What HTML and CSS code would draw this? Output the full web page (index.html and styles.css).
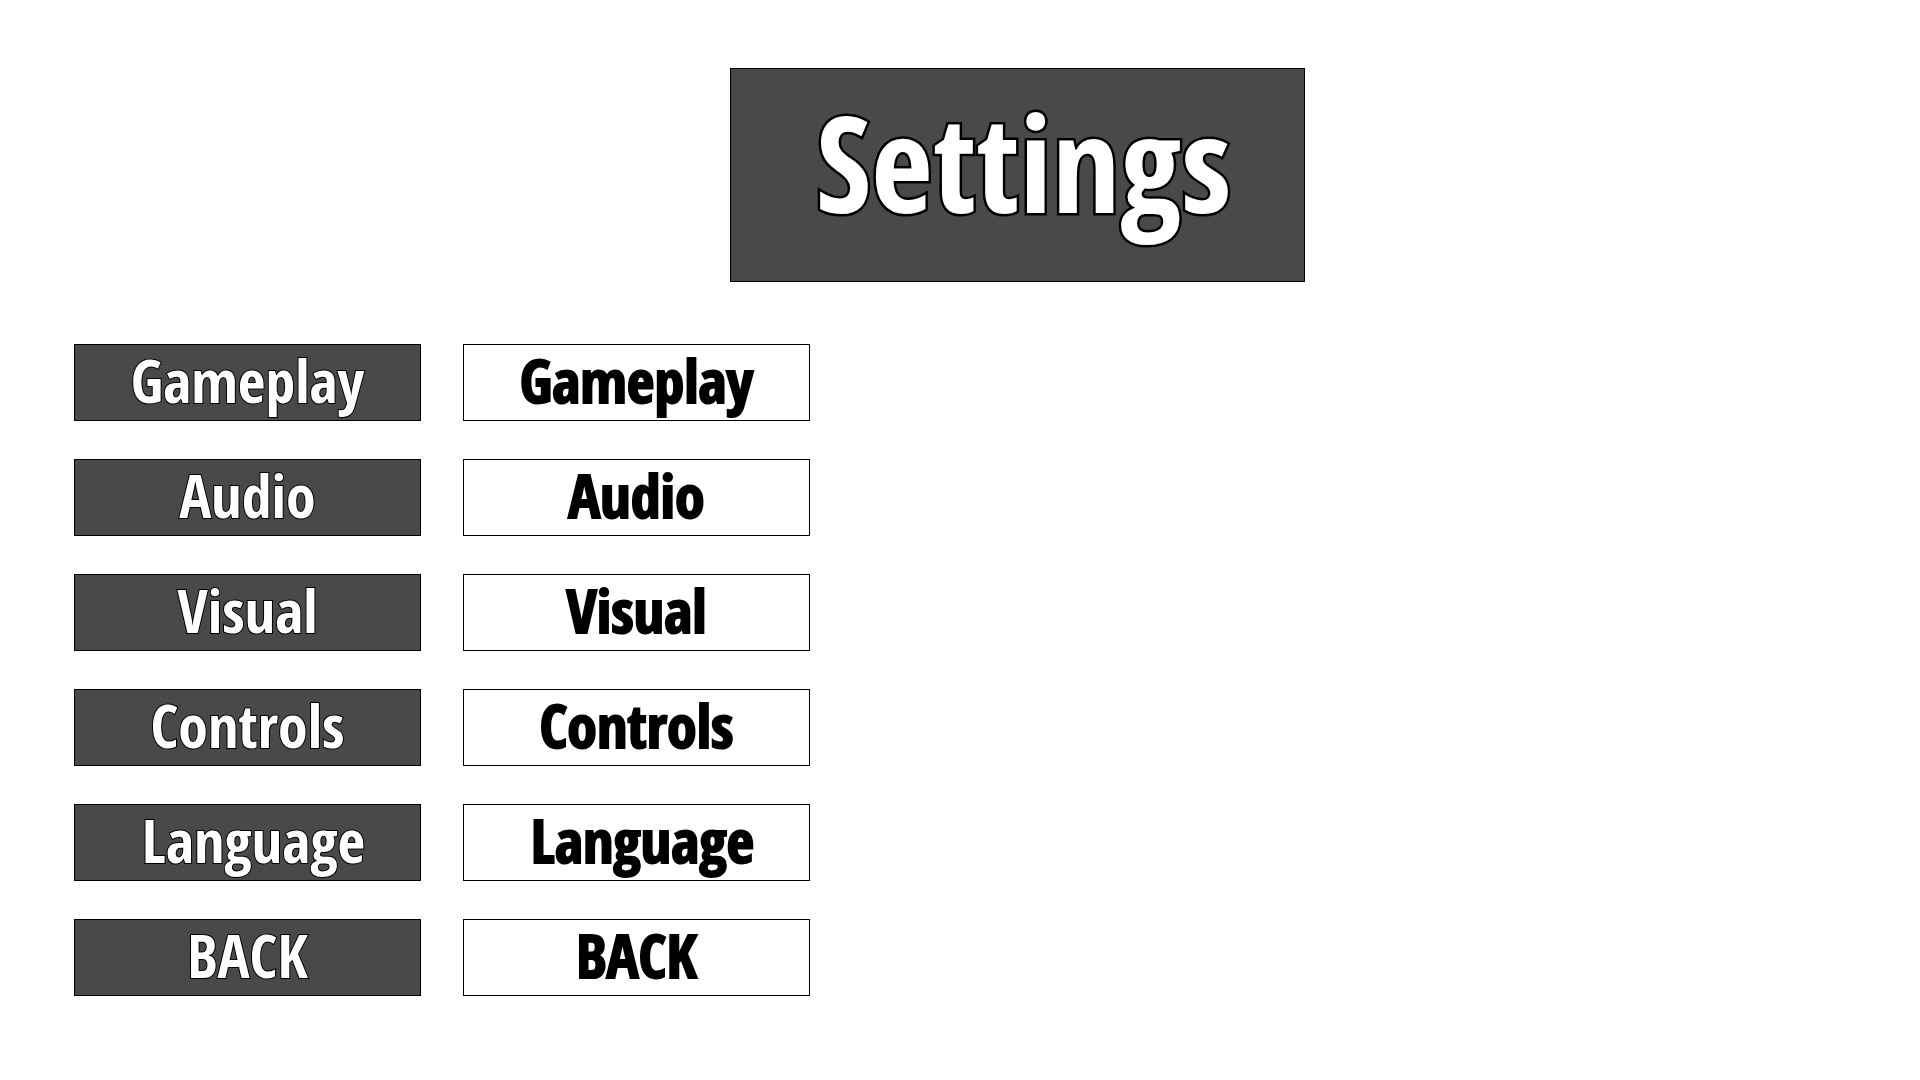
FILE: index.html
```html
<!DOCTYPE html>
<html lang="en">
<head>
  <meta charset="utf-8">
  <meta name="viewport" content="width=device-width, initial-scale=1">
  <title>Settings</title>
  <link rel="stylesheet" href="styles.css">
</head>
<body>
  <header class="header">
    <h1 class="title">Settings</h1>
  </header>
  <main class="menus">
    <nav class="menu menu-dark" aria-label="Settings menu">
      <button type="button" class="item">Gameplay</button>
      <button type="button" class="item">Audio</button>
      <button type="button" class="item">Visual</button>
      <button type="button" class="item">Controls</button>
      <button type="button" class="item item-indented">Language</button>
      <button type="button" class="item">BACK</button>
    </nav>
    <nav class="menu menu-light" aria-label="Settings menu, highlighted">
      <button type="button" class="item">Gameplay</button>
      <button type="button" class="item">Audio</button>
      <button type="button" class="item">Visual</button>
      <button type="button" class="item">Controls</button>
      <button type="button" class="item item-indented">Language</button>
      <button type="button" class="item">BACK</button>
    </nav>
  </main>
</body>
</html>
```
FILE: styles.css
```css
* {
  box-sizing: border-box;
}

body {
  margin: 0;
  background: #fff;
  color: #000;
  font-family: "Futura Condensed", "Open Sans Condensed", "Liberation Sans Narrow", "DejaVu Sans Condensed", sans-serif;
  font-weight: 700;
}

.header {
  display: flex;
  justify-content: center;
  padding: 68px 0 0 115px;
}

.title {
  width: 575px;
  max-width: 100%;
  margin: 0;
  padding: 18px 0 46px 12px;
  border: 1px solid #000;
  background: #4a4849;
  color: #fff;
  font-size: 134px;
  line-height: 148px;
  text-align: center;
  -webkit-text-stroke: 5px #000;
  paint-order: stroke fill;
}

.menus {
  display: grid;
  grid-template-columns: repeat(2, minmax(0, 347px));
  column-gap: 42px;
  padding: 62px 74px;
}

.menu {
  display: flex;
  flex-direction: column;
  gap: 38px;
}

.item {
  padding: 0 0 5px;
  border: 1px solid #000;
  font: inherit;
  font-size: 60px;
  line-height: 70px;
  text-align: center;
  cursor: pointer;
}

.item-indented {
  padding-left: 12px;
}

.menu-dark .item {
  background: #4a4849;
  color: #fff;
  -webkit-text-stroke: 2px #000;
  paint-order: stroke fill;
}

.menu-light .item {
  background: #fff;
  color: #000;
  -webkit-text-stroke: 2px #000;
}
```
